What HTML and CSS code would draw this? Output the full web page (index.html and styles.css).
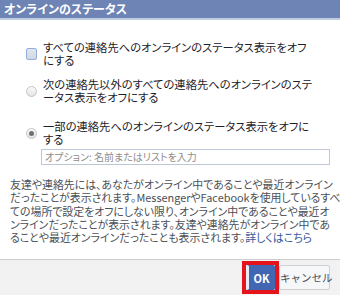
FILE: index.html
```html
<!DOCTYPE html>
<html lang="ja">
<head>
<meta charset="utf-8">
<link rel="stylesheet" href="styles.css">
</head>
<body>
<div class="dialog">
  <div class="header">オンラインのステータス</div>
  <div class="content">
    <div class="options">
      <div class="option opt1">
        <span class="check"></span>
        <span class="label">すべての連絡先へのオンラインのステータス表示をオフ<br>にする</span>
      </div>
      <div class="option opt2">
        <span class="radio"></span>
        <span class="label">次の連絡先以外のすべての連絡先へのオンラインのステ<br>ータス表示をオフにする</span>
      </div>
      <div class="option-group">
        <div class="option opt3">
          <span class="radio selected"></span>
          <span class="label">一部の連絡先へのオンラインのステータス表示をオフに<br>する</span>
        </div>
        <div class="input">オプション: 名前またはリストを入力</div>
      </div>
    </div>
    <p class="note">友達や連絡先には、あなたがオンライン中であることや最近オンライン<br>だったことが表示されます。MessengerやFacebookを使用しているすべ<br>ての場所で設定をオフにしない限り、オンライン中であることや最近オ<br>ンラインだったことが表示されます。友達や連絡先がオンライン中であ<br>ることや最近オンラインだったことも表示されます。<a class="link">詳しくはこちら</a></p>
  </div>
  <div class="footer">
    <div class="highlight"><button class="btn ok">OK</button></div>
    <button class="btn cancel">キャンセル</button>
  </div>
</div>
</body>
</html>
```

FILE: styles.css
```css
html, body {
  margin: 0;
  padding: 0;
  background: #fff;
}
body {
  font-family: "Noto Sans CJK JP", "Noto Sans", sans-serif;
  font-feature-settings: "palt";
  width: 340px;
  height: 295px;
  overflow: hidden;
}
.dialog {
  width: 340px;
  height: 295px;
  display: flex;
  flex-direction: column;
}
.header {
  height: 18px;
  background: #6d84b4;
  border-bottom: 2px solid #c3cde2;
  color: #fff;
  font-weight: bold;
  font-size: 12px;
  line-height: 18px;
  padding-left: 4px;
  box-sizing: content-box;
}
.content {
  flex: 1;
  padding: 21px 10px 0 10px;
}
.options {
  display: flex;
  flex-direction: column;
  gap: 11px;
  padding-left: 16px;
}
.option {
  display: flex;
  align-items: center;
  gap: 6px;
}
.label {
  font-size: 11.3px;
  line-height: 13px;
  color: #1d2129;
  white-space: nowrap;
}
.check {
  width: 9px;
  height: 10px;
  border: 1px solid #8fb0dc;
  border-radius: 2px;
  background: linear-gradient(#e2e6ec, #d3d8e0);
  flex: none;
}
.radio {
  width: 9px;
  height: 9px;
  border: 1px solid #c4c4c4;
  border-radius: 50%;
  background: linear-gradient(#fafafa, #e4e4e4);
  flex: none;
  position: relative;
}
.radio.selected::after {
  content: "";
  position: absolute;
  left: 2px;
  top: 2px;
  width: 5px;
  height: 5px;
  border-radius: 50%;
  background: #707070;
}
.option-group {
  display: flex;
  flex-direction: column;
  gap: 3px;
  margin-top: 5px;
}
.input {
  margin-left: 15px;
  height: 14px;
  border: 1px solid #bdc7d8;
  font-size: 10px;
  line-height: 14px;
  color: #8d8d8d;
  padding-left: 3px;
}
.note {
  margin: 13px 0 0 0;
  font-size: 10.9px;
  line-height: 13.3px;
  color: #4b4f56;
  white-space: nowrap;
}
.link {
  color: #365899;
}
.footer {
  height: 35px;
  background: #f2f2f2;
  border-top: 1px solid #cccccc;
  display: flex;
  justify-content: flex-end;
  align-items: center;
  padding-right: 10px;
}
.highlight {
  border: 4px solid #e5141c;
  padding: 0;
  display: flex;
}
.btn {
  font-family: "Noto Sans CJK JP", sans-serif;
  font-size: 11px;
  height: 25px;
  margin: 0;
  border-radius: 2px;
  white-space: nowrap;
  padding: 0;
}
.ok {
  background: #4267b2;
  border: 1px solid #4267b2;
  border-left: 3px solid #e8ecf4;
  color: #fff;
  font-weight: bold;
  width: 29px;
}
.cancel {
  background: #f6f7f9;
  border: 1px solid #ced0d4;
  color: #4b4f56;
  width: 51px;
  font-size: 10.5px;
}
```
